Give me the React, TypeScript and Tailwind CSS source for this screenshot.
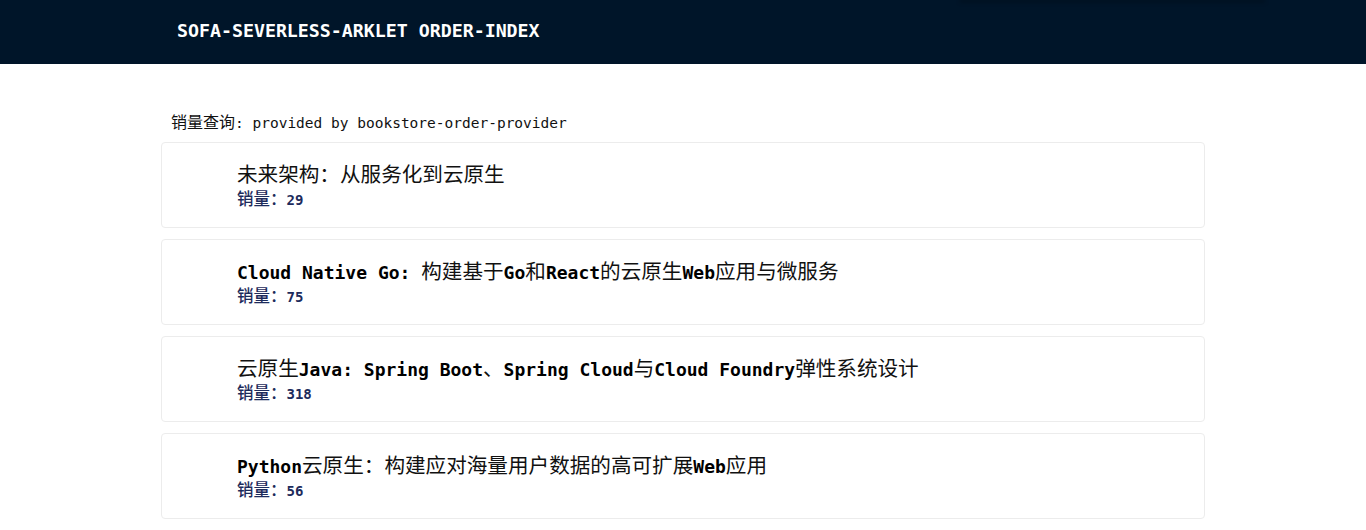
import type { ReactNode } from "react";

const books = [
  { title: "未来架构：从服务化到云原生", sales: 29 },
  { title: "Cloud Native Go: 构建基于Go和React的云原生Web应用与微服务", sales: 75 },
  { title: "云原生Java: Spring Boot、Spring Cloud与Cloud Foundry弹性系统设计", sales: 318 },
  { title: "Python云原生：构建应对海量用户数据的高可扩展Web应用", sales: 56 },
];

const mono = "font-['DejaVu_Sans_Mono','Noto_Sans_CJK_SC',monospace]";
const cjkRe = /([\u3000-\u303f\u4e00-\u9fff\uff00-\uffef]+)/;

// CJK runs get their own class (bigger, regular weight) so widths match the fallback font
function mixed(text: string, cjkClass: string): ReactNode[] {
  return text.split(cjkRe).filter(Boolean).map((part, i) =>
    cjkRe.test(part) ? (
      <span key={i} className={cjkClass}>{part}</span>
    ) : (
      <span key={i}>{part}</span>
    )
  );
}

export default function App() {
  return (
    <div className={`min-h-screen bg-white ${mono}`}>
      {/* Header */}
      <header className="relative h-16 bg-[#001529] flex items-center pb-[3px] px-[177px]">
        <span className="text-white font-bold text-[18.25px]">SOFA-SEVERLESS-ARKLET ORDER-INDEX</span>
        <div className="absolute top-0 left-[960px] w-[305px] h-[2px] bg-black/40 blur-[2px]" />
      </header>

      <main className="mx-auto w-[1044px] pt-[46px]">
        <div className="px-[10px] text-[14.5px] text-[#111] leading-[22px]">
          {mixed("销量查询", "text-[16px] font-['Noto_Sans_CJK_SC',sans-serif]")}: provided by bookstore-order-provider
        </div>

        <div className="mt-[8px] flex flex-col gap-[11px]">
          {books.map((b) => (
            <div
              key={b.sales}
              className="h-[86px] border border-[#ececec] rounded-[4px] pl-[75px] pt-[18px]"
            >
              <div className="text-[18px] font-bold text-black leading-[24px]">
                {mixed(b.title, "text-[20.6px] font-normal text-[#111] font-['Noto_Sans_CJK_SC',sans-serif]")}
              </div>
              <div className="text-[14px] font-bold text-[#1d2b5c] leading-[20px]">
                <span className="text-[16.5px] font-medium font-['Noto_Sans_CJK_SC',sans-serif]">销量：</span>
                {b.sales}
              </div>
            </div>
          ))}
        </div>
      </main>
    </div>
  );
}
